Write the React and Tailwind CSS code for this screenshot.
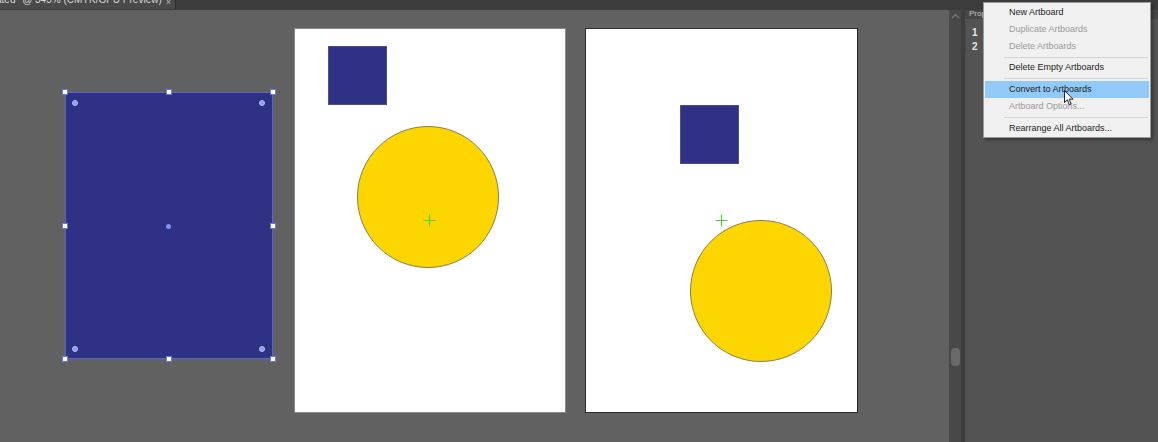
import React from "react";

function Handle({ x, y }) {
  return (
    <div
      className="absolute w-[6px] h-[6px] bg-white border border-[#6d7bd8]"
      style={{ left: x - 3, top: y - 3 }}
    />
  );
}

function Dot({ x, y }) {
  return (
    <div
      className="absolute w-[6px] h-[6px] rounded-full bg-[#8f9cf0] border border-[#b4bdf7]"
      style={{ left: x - 3, top: y - 3 }}
    />
  );
}

function Cross({ x, y }) {
  return (
    <svg className="absolute" width="13" height="13" style={{ left: x - 6, top: y - 6 }} viewBox="0 0 13 13">
      <path d="M6.5 0.5V12.5M0.5 6.5H12.5" stroke="#4cd03a" strokeWidth="1.2" />
    </svg>
  );
}

function Item({ children, disabled, active }) {
  return (
    <div
      className={
        "h-[17px] flex items-center pl-[24px] mx-[1px] text-[9px] leading-none " +
        (active ? "bg-[#91c9f7] text-[#1a1a1a] " : "") +
        (disabled ? "text-[#9a9a9a]" : "text-[#1c1c1c]")
      }
    >
      {children}
    </div>
  );
}

function Sep({ h }) {
  return (
    <div className={"flex items-center pl-[20px] pr-[2px] " + h}>
      <div className="h-px w-full bg-[#d4d4d4]" />
    </div>
  );
}

export default function App() {
  return (
    <div
      className="w-[1158px] h-[442px] flex flex-col bg-[#616161] overflow-hidden relative"
      style={{ fontFamily: '"Liberation Sans", Arial, sans-serif' }}
    >
      {/* top tab bar */}
      <div className="h-[10px] flex shrink-0 bg-[#3c3c3c]">
        <div className="w-[176px] h-[9px] bg-[#4a4a4a] border-r border-[#2e2e2e] overflow-hidden relative flex">
          <span className="text-[10px] text-[#d8d8d8] leading-none whitespace-nowrap -mt-[5px] -ml-[4px]">
            ated* @ 343% (CMYK/GPU Preview)
          </span>
          <span className="absolute right-[4px] -top-[4px] text-[9px] text-[#bdbdbd]">×</span>
        </div>
        <div className="flex-1" />
      </div>

      <div className="flex flex-1">
        {/* canvas */}
        <div className="relative w-[949px] bg-[#616161]">
          {/* selected blue rect */}
          <div className="absolute left-[65px] top-[82px] w-[208px] h-[267px] bg-[#2e3184] border border-[#5a66cf]" />
          <Handle x={65} y={82} />
          <Handle x={169} y={82} />
          <Handle x={273} y={82} />
          <Handle x={65} y={216} />
          <Handle x={273} y={216} />
          <Handle x={65} y={349} />
          <Handle x={169} y={349} />
          <Handle x={273} y={349} />
          <Dot x={75} y={93} />
          <Dot x={262} y={93} />
          <Dot x={75} y={339} />
          <Dot x={262} y={339} />
          <div className="absolute left-[166px] top-[214px] w-[5px] h-[5px] rounded-full bg-[#7f8ff0]" />

          {/* artboard 1 */}
          <div className="absolute left-[294px] top-[18px] w-[272px] h-[385px] bg-white border border-[#8a8a8a]">
            <div className="absolute left-[33px] top-[17px] w-[59px] h-[59px] bg-[#2e3184] border border-[#4b4f8f]" />
            <div className="absolute left-[62px] top-[97px] w-[142px] h-[142px] rounded-full bg-[#fdd600] border border-[#8a7f4e]" />
          </div>
          <Cross x={429} y={210} />

          {/* artboard 2 */}
          <div className="absolute left-[585px] top-[18px] w-[273px] h-[385px] bg-white border border-[#2b2b2b]">
            <div className="absolute left-[94px] top-[76px] w-[59px] h-[59px] bg-[#2e3184] border border-[#4b4f8f]" />
            <div className="absolute left-[104px] top-[191px] w-[142px] h-[142px] rounded-full bg-[#fdd600] border border-[#8a7f4e]" />
          </div>
          <Cross x={721} y={210} />
        </div>

        {/* scrollbar */}
        <div className="w-[13px] bg-[#484848] flex flex-col items-center border-r border-[#3f3f3f]">
          <svg width="9" height="6" viewBox="0 0 9 6" className="mt-[3px]">
            <path d="M1 5L4.5 1.5L8 5" stroke="#7a7a7a" strokeWidth="1.2" fill="none" />
          </svg>
          <div className="mt-[329px] w-[9px] h-[18px] rounded-[4px] bg-[#6a6a6a]" />
        </div>
        <div className="w-[3px] bg-[#3e3e3e]" />

        {/* right panel */}
        <div className="flex-1 bg-[#535353] flex flex-col">
          <div className="h-[9px] bg-[#474747] flex items-center pl-[4px]">
            <span className="text-[8px] text-[#c8c8c8] leading-none -mt-[2px]">Properties</span>
          </div>
          <div className="mt-[6px] ml-[0px] w-[22px] flex flex-col border-l border-[#4a4a4a]">
            <div className="h-[14px] flex items-center pl-[6px] text-[10px] font-bold text-[#e6e6e6]">1</div>
            <div className="h-[14px] flex items-center pl-[6px] text-[10px] font-bold text-[#e6e6e6]">2</div>
          </div>
        </div>
      </div>

      {/* flyout menu */}
      <div className="absolute left-[983px] top-[2px] w-[168px] h-[136px] bg-[#f0f0f0] border border-[#9c9c9c] shadow-[2px_2px_3px_rgba(0,0,0,0.35)] pt-[1px]">
        <Item>New Artboard</Item>
        <Item disabled>Duplicate Artboards</Item>
        <Item disabled>Delete Artboards</Item>
        <Sep h="h-[4px]" />
        <Item>Delete Empty Artboards</Item>
        <Sep h="h-[5px]" />
        <Item active>Convert to Artboards</Item>
        <Item disabled>Artboard Options...</Item>
        <Sep h="h-[5px]" />
        <Item>Rearrange All Artboards...</Item>
      </div>

      {/* mouse cursor */}
      <svg className="absolute left-[1064px] top-[90px]" width="10" height="16" viewBox="0 0 10 16">
        <path d="M0.5 0.5V12.5L3.3 9.8L5.4 14.8L7.2 14L5.2 9.2H9L0.5 0.5Z" fill="white" stroke="#222" strokeWidth="1" />
      </svg>
    </div>
  );
}
